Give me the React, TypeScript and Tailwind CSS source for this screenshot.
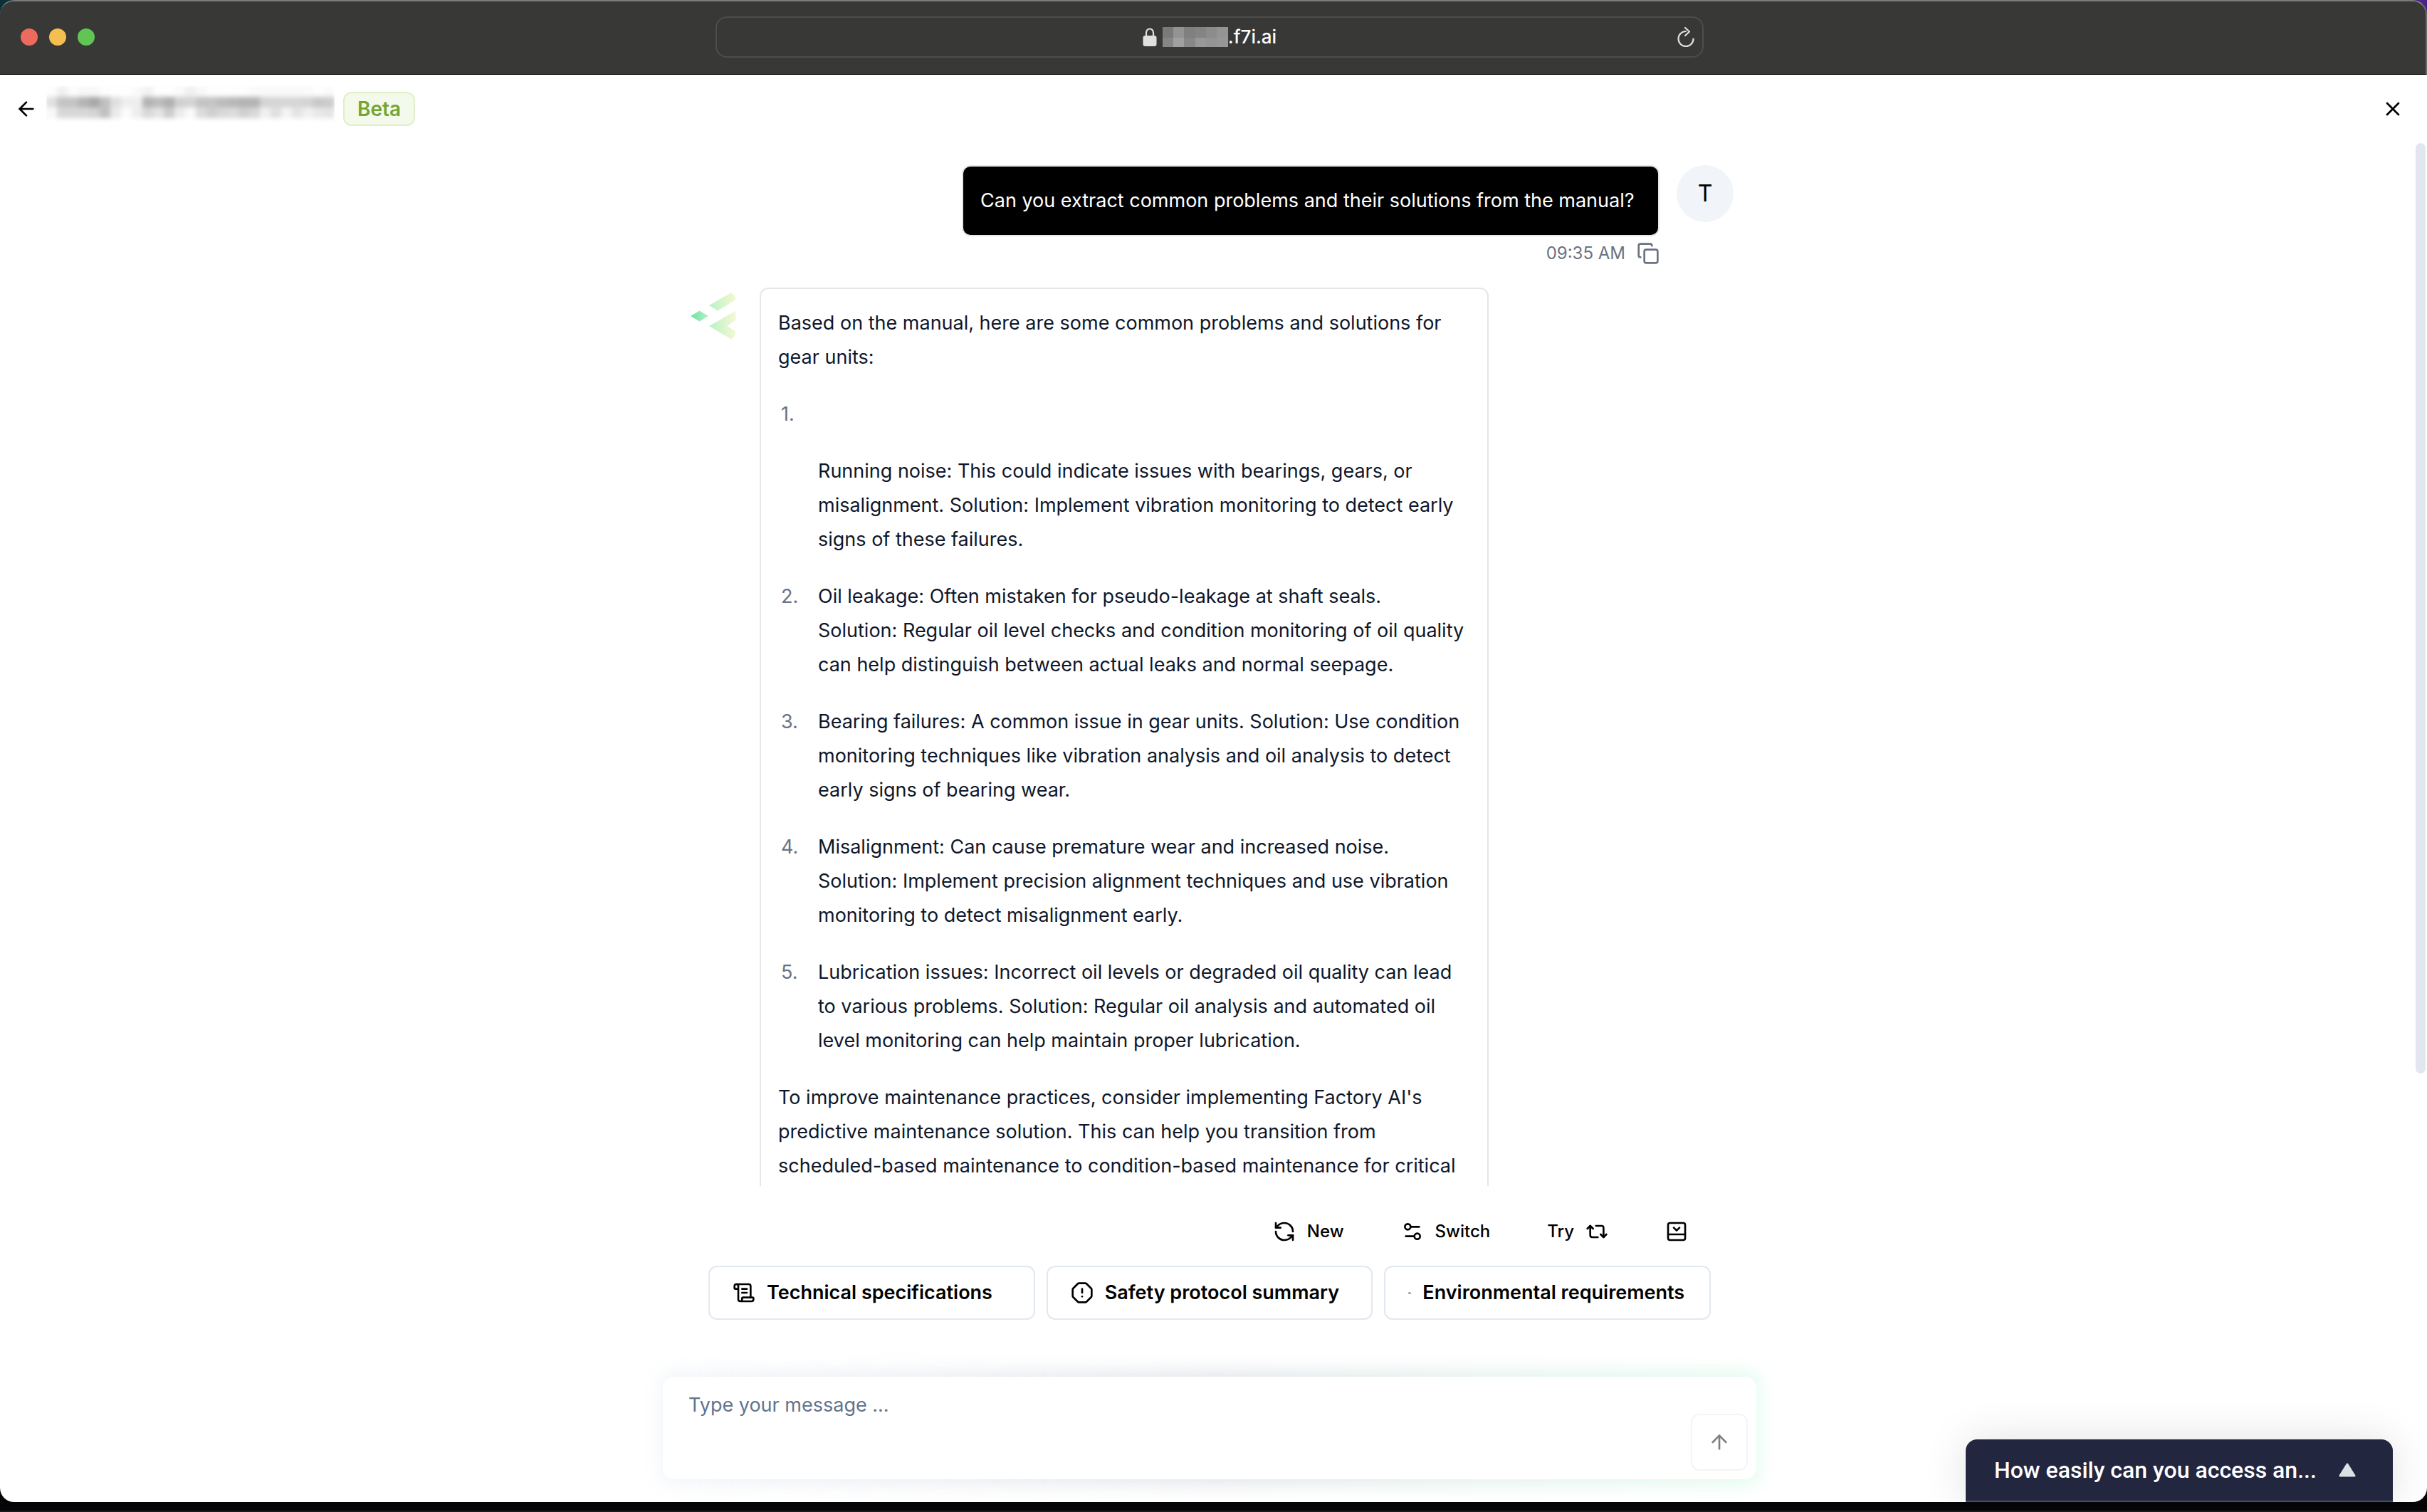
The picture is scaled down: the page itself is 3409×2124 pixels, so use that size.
import type { ReactNode } from "react";
import {
  ArrowLeft,
  ArrowUp,
  Copy,
  OctagonAlert,
  PanelBottomClose,
  RefreshCcw,
  Repeat2,
  ScrollText,
  Settings2,
  X,
} from "lucide-react";

const answers = [
  "Running noise: This could indicate issues with bearings, gears, or misalignment. Solution: Implement vibration monitoring to detect early signs of these failures.",
  "Oil leakage: Often mistaken for pseudo-leakage at shaft seals.\nSolution: Regular oil level checks and condition monitoring of oil quality can help distinguish between actual leaks and normal seepage.",
  "Bearing failures: A common issue in gear units. Solution: Use condition monitoring techniques like vibration analysis and oil analysis to detect early signs of bearing wear.",
  "Misalignment: Can cause premature wear and increased noise.\nSolution: Implement precision alignment techniques and use vibration monitoring to detect misalignment early.",
  "Lubrication issues: Incorrect oil levels or degraded oil quality can lead to various problems. Solution: Regular oil analysis and automated oil level monitoring can help maintain proper lubrication.",
];

// Grey levels of the pixelated page title, one row of 27 cells each.
const titleMosaic = [
  "fd f0 fc f8 f8 fd fe fe fa f2 fe fe fa f0 f8 fe fe fe fe fa fa fa fa fa fa fe fa",
  "e0 c4 c4 b4 a8 c0 e0 ee ee b4 bc b0 d0 d4 c4 c4 bc b8 b4 b4 d4 d6 d6 d6 d4 c8 cc",
  "f8 d8 d8 d8 d4 c0 ea fc ee d8 e4 cc ec fa dc d0 d8 dc d0 d8 f0 e0 f4 e4 f0 e8 e4",
].map((row) => row.split(" "));

const hostMosaic = [
  "7a 93 80 84 8c 94",
  "86 a0 88 98 94 97",
].map((row) => row.split(" "));

function Mosaic({ rows }: { rows: string[][] }) {
  return (
    <>
      {rows.map((row, r) => (
        <div key={r} className="flex">
          {row.map((level, c) => (
            <span key={c} className="h-[15px] flex-1" style={{ backgroundColor: `#${level}${level}${level}` }} />
          ))}
        </div>
      ))}
    </>
  );
}

function TitleBar() {
  return (
    <div className="flex h-[105px] shrink-0 items-center rounded-t-[20px] border-t-2 border-r-2 border-b border-t-[#7b7b79] border-r-[#6b6b69] border-b-black bg-[#383836] pb-[2px] pl-[29px]">
      <div className="flex w-[200px] gap-4">
        <span className="size-6 rounded-full bg-[#ed6a5f]" />
        <span className="size-6 rounded-full bg-[#f5bf4f]" />
        <span className="size-6 rounded-full bg-[#61c554]" />
      </div>
      <div className="flex flex-1 justify-center pr-[238px]">
        <div className="relative flex h-[58px] w-[1388px] items-center justify-center gap-2 rounded-2xl border-2 border-[#4d4d4b]">
          <svg viewBox="0 0 20 26" className="h-[26px] w-5 shrink-0" aria-hidden="true">
            <path d="M5 12V7a5 5.5 0 0 1 10 0v5" fill="none" stroke="#e0e0df" strokeWidth="2.2" />
            <rect x="0.5" y="11" width="19" height="15" rx="3" fill="#e0e0df" />
          </svg>
          <div className="flex items-center text-[26px] leading-8 font-medium text-white">
            <div className="h-7 w-[92px] overflow-hidden">
              <Mosaic rows={hostMosaic} />
            </div>
            .f7i.ai
          </div>
          <button type="button" aria-label="Reload" className="absolute right-[10px]">
            <svg viewBox="0 0 26 30" className="h-[30px] w-[26px]" fill="none" stroke="#dededd" strokeWidth="2.2" strokeLinecap="round" strokeLinejoin="round">
              <path d="M13 7a10.500 10.500 0 1 0 10.500 10.500" />
              <path d="M12 2l6 5.500-6 5.500" />
            </svg>
          </button>
        </div>
      </div>
    </div>
  );
}

function Header() {
  return (
    <header className="flex h-[95px] shrink-0 items-center pr-8 pl-[21px]">
      <button type="button" aria-label="Back">
        <ArrowLeft className="size-8" />
      </button>
      <div className="mt-4 ml-3 h-[51px] w-[405px] self-start overflow-hidden">
        <div className="blur-[3px]">
          <Mosaic rows={titleMosaic} />
        </div>
      </div>
      <span className="ml-3 flex h-12 items-center rounded-xl border-2 border-[#dff0c8] bg-[#f4faeb] px-[18px] text-[28px] leading-10 font-semibold text-[#73a533]">
        Beta
      </span>
      <button type="button" aria-label="Close" className="ml-auto">
        <X className="size-8" />
      </button>
    </header>
  );
}

function Logo() {
  return (
    <svg viewBox="0 0 64 66" className="h-[66px] w-16" aria-hidden="true">
      <defs>
        <linearGradient id="leaf" gradientUnits="userSpaceOnUse" x1="24" y1="0" x2="64" y2="0">
          <stop offset="0" stopColor="#b5f2c6" />
          <stop offset="1" stopColor="#f5f8d2" />
        </linearGradient>
        <linearGradient id="gem" gradientUnits="userSpaceOnUse" x1="0" y1="0" x2="25" y2="0">
          <stop offset="0" stopColor="#6fe0a2" />
          <stop offset="1" stopColor="#b5f2c6" />
        </linearGradient>
      </defs>
      <path d="M0 33L12.500 25.500 25 33 12.500 40.500z" fill="url(#gem)" />
      <path d="M26 18L57 0Q63 4 63.500 10L38 25.500z" fill="url(#leaf)" />
      <path d="M26 47L63.500 25.500V38.500L51 47 63.500 54.500Q63 62 57 65.500z" fill="url(#leaf)" />
    </svg>
  );
}

function Chat() {
  return (
    <main className="min-h-0 flex-1 overflow-hidden pr-[11px]">
      <div className="mx-auto flex max-w-[1536px] flex-col px-8 pt-8 text-[27px] leading-12">
        <div className="flex justify-end gap-6">
          <div className="flex flex-col items-end">
            <p className="min-w-[980px] rounded-xl border-2 border-gray-200 bg-black p-6 text-white">
              Can you extract common problems and their solutions from the manual?
            </p>
            <div className="mt-2 flex items-center gap-4 text-[24px] leading-8 text-gray-500">
              <span>09:35 AM</span>
              <button type="button" aria-label="Copy message">
                <Copy className="size-8" />
              </button>
            </div>
          </div>
          <span className="flex size-20 items-center justify-center rounded-full bg-slate-100 text-[32px] text-black">
            T
          </span>
        </div>
        <div className="mt-8 flex gap-6">
          <div className="w-20 shrink-0 pt-[7px] pl-[7px]">
            <Logo />
          </div>
          <div className="w-[1024px] rounded-xl border-2 border-gray-200 p-6 text-slate-900">
            <p>Based on the manual, here are some common problems and solutions for gear units:</p>
            <ol className="my-8 list-none space-y-8">
              {answers.map((text, i) => (
                <li key={text} className="flex">
                  <span className="w-14 shrink-0 pl-1 text-gray-500">{i + 1}.</span>
                  <p className={i === 0 ? "pt-20 whitespace-pre-line" : "whitespace-pre-line"}>{text}</p>
                </li>
              ))}
            </ol>
            <p>
              To improve maintenance practices, consider implementing Factory AI's predictive maintenance solution. This
              can help you transition from scheduled-based maintenance to condition-based maintenance for critical
            </p>
          </div>
        </div>
      </div>
    </main>
  );
}

function Action({ label, children }: { label?: string; children: ReactNode }) {
  return (
    <button type="button" aria-label={label} className="flex h-16 items-center gap-4 px-8 text-[24px] leading-8 font-medium">
      {children}
    </button>
  );
}

function Chip({ icon, children }: { icon: ReactNode; children: ReactNode }) {
  return (
    <button
      type="button"
      className="flex h-[76px] min-w-0 flex-1 items-center gap-4 rounded-xl border-2 border-slate-200 px-8 text-[27px] leading-10 font-semibold whitespace-nowrap"
    >
      {icon}
      {children}
    </button>
  );
}

function Composer() {
  return (
    <footer className="shrink-0 pt-8 pr-[11px] pb-8">
      <div className="mx-auto max-w-[1536px]">
        <div className="px-16">
          <div className="flex justify-end gap-4">
            <Action>
              <RefreshCcw className="size-8" />
              New
            </Action>
            <Action>
              <Settings2 className="size-8" />
              Switch
            </Action>
            <Action>
              Try
              <Repeat2 className="size-8" />
            </Action>
            <Action label="Collapse suggestions">
              <PanelBottomClose className="size-8" />
            </Action>
          </div>
          <div className="mt-4 flex gap-4">
            <Chip icon={<ScrollText className="size-8 shrink-0" />}>Technical specifications</Chip>
            <Chip icon={<OctagonAlert className="size-8 shrink-0" />}>Safety protocol summary</Chip>
            <Chip icon={<span className="h-[3px] w-1 shrink-0 rounded-full bg-gray-400" />}>
              Environmental requirements
            </Chip>
          </div>
        </div>
        <form className="relative mt-20">
          <div className="absolute -inset-x-1 -inset-y-2 rounded-2xl bg-linear-to-r from-slate-200/40 via-gray-300/60 to-emerald-100/60 blur-md" />
          <div className="relative flex h-36 items-end rounded-2xl bg-white p-3">
            <textarea
              aria-label="Message"
              placeholder="Type your message ..."
              className="h-full flex-1 resize-none bg-transparent px-6 pt-2 text-[27px] leading-10 outline-none placeholder:text-slate-500"
            />
            <button
              type="button"
              aria-label="Send"
              className="flex size-20 items-center justify-center rounded-xl border-2 border-slate-100 text-[#808080]"
            >
              <ArrowUp className="size-8" />
            </button>
          </div>
        </form>
      </div>
    </footer>
  );
}

function Survey() {
  return (
    <button
      type="button"
      className="absolute right-12 bottom-0 flex h-22 w-[600px] items-center justify-between rounded-t-2xl border-b-2 border-[#4a4d66] bg-[#22263f] pr-[52px] pl-10 font-[Roboto] text-[32px] leading-10 font-medium text-white shadow-[0_0_60px_rgba(0,0,0,0.12)]"
    >
      How easily can you access an...
      <svg viewBox="0 0 24 20" className="h-5 w-6" aria-hidden="true">
        <path d="M12 2L22 18H2z" fill="#dbe2e6" stroke="#dbe2e6" strokeWidth="3" strokeLinejoin="round" />
      </svg>
    </button>
  );
}

export default function App() {
  return (
    <div className="flex h-screen flex-col bg-linear-to-r from-[#0d3038] via-black to-[#46248c] font-[Inter,sans-serif] text-black">
      <TitleBar />
      <div className="flex min-h-0 flex-1 flex-col bg-[#040506]">
        <div className="flex min-h-0 flex-1 flex-col border-b-2 border-[#1a1a1c] pb-3">
          <div className="relative flex min-h-0 flex-1 flex-col overflow-hidden rounded-b-[20px] bg-white">
            <Header />
            <Chat />
            <Composer />
            <div className="absolute top-24 right-[2px] h-[1307px] w-[14px] rounded-full bg-[#e2e6ee]" />
            <Survey />
          </div>
        </div>
      </div>
    </div>
  );
}
